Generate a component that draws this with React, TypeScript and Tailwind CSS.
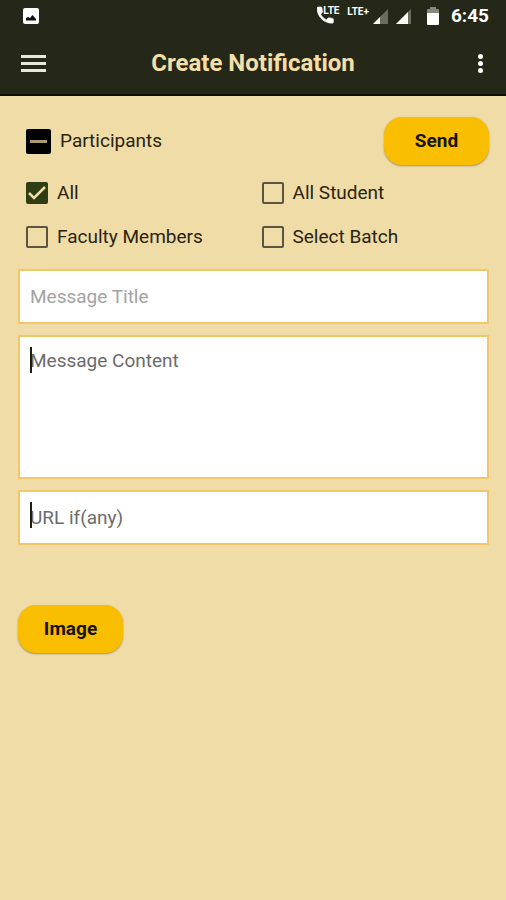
import { useState } from 'react';

const groups = ['All', 'All Student', 'Faculty Members', 'Select Batch'];

const fieldClass =
  'block w-full border-2 border-[#f3c769] bg-white px-[10px] text-[19px] leading-6 text-black outline-none';

const buttonClass =
  'h-12 w-[105px] rounded-[18px] bg-[#fabe00] text-[19px] font-bold text-[#171400] shadow-[0_1px_2px_rgba(0,0,0,0.35)]';

const StatusBar = () => {
  return (
    <div className="flex h-8 items-center justify-between pl-[23px] pr-[17px] text-white">
      <svg viewBox="0 0 16 16" className="size-4">
        <rect width="16" height="16" rx="2" fill="#fff" />
        <path d="M3 12.500V10l2-1 2 1 2.500-3 3.500 4v1.500z" fill="#111" />
      </svg>

      <div className="flex items-center">
        <div className="relative mr-[7px] h-5 w-[23px]">
          <svg viewBox="0 0 24 20" className="h-5 w-6">
            <path
              d="M0 2.200C0 1.500.5 1 1.200 1h2.600c.6 0 1.100.5 1.200 1.100.1 1.200.3 2.200.6 3.200.1.400 0 .9-.3 1.200L3.600 8.200c1.300 2.500 3.200 4.300 5.800 5.600l1.700-1.700c.3-.3.800-.4 1.200-.3 1 .3 2.100.5 3.200.6.600 0 .9.500.9 1.100V16c0 .7-.5 1.200-1.200 1.200C6.800 17.200 0 10.400 0 2.200z"
              fill="#fff"
              stroke="#fff"
              strokeWidth="0.600"
            />
          </svg>
          <span className="absolute left-[6px] top-[-1px] text-[10px] font-bold leading-3">LTE</span>
        </div>
        <span className="mr-1 -mt-2 text-[10px] font-bold leading-3">LTE+</span>
        <svg viewBox="0 0 15 15" className="mr-2 size-[15px]">
          <path d="M15 0v15H0z" fill="#6a6d5c" />
          <path d="M7 8v7H0z" fill="#fff" />
        </svg>
        <svg viewBox="0 0 15 15" className="mr-4 size-[15px]">
          <path d="M15 0v15H0z" fill="#6a6d5c" />
          <path d="M12 3v12H0z" fill="#fff" />
        </svg>
        <svg viewBox="0 0 12 18" className="mr-3 h-[18px] w-3">
          <path d="M3 0h6v2h2q1 0 1 1v3H0V3q0-1 1-1h2z" fill="#85877a" />
          <path d="M0 6h12v11q0 1-1 1H1q-1 0-1-1z" fill="#fff" />
        </svg>
        <span className="text-[19px] font-bold leading-6">6:45</span>
      </div>
    </div>
  );
};

const Header = () => {
  return (
    <header className="border-b-2 border-[#0c0d06] bg-[#252818]">
      <StatusBar />
      <div className="flex h-[62px] items-center justify-between pl-[21px] pr-[23px]">
        <button aria-label="Open menu" className="flex w-[25px] flex-col gap-1">
          <span className="h-[3px] w-full bg-[#e9e8dc]" />
          <span className="h-[3px] w-full bg-[#e9e8dc]" />
          <span className="h-[3px] w-full bg-[#e9e8dc]" />
        </button>
        <h1 className="text-2xl font-bold text-[#f3dfa8]">Create Notification</h1>
        <button aria-label="More options" className="flex w-[23px] flex-col items-end gap-[2px]">
          <span className="size-[5px] rounded-full bg-white" />
          <span className="size-[5px] rounded-full bg-white" />
          <span className="size-[5px] rounded-full bg-white" />
        </button>
      </div>
    </header>
  );
};

type CheckOptionProps = {
  label: string;
  checked: boolean;
  onChange: () => void;
};

const CheckOption = ({ label, checked, onChange }: CheckOptionProps) => {
  return (
    <label className="flex h-11 items-center gap-[9px] pl-2">
      <span className="relative size-[22px] shrink-0">
        <input
          type="checkbox"
          checked={checked}
          onChange={onChange}
          className="block size-[22px] appearance-none rounded-[2px] border-2 border-[#5c5340] checked:border-[#2f3d14] checked:bg-[#2f3d14]"
        />
        {checked && (
          <svg viewBox="0 0 22 22" className="pointer-events-none absolute inset-0 size-[22px]">
            <path d="M3 11l5 5L19 5" fill="none" stroke="#f1dda8" strokeWidth="2.500" />
          </svg>
        )}
      </span>
      {label}
    </label>
  );
};

// text cursor shown at the start of an empty field
const Caret = () => <span className="pointer-events-none absolute left-3 top-3 h-[26px] w-[2px] bg-[#1c1e10]" />;

const App = () => {
  const [selected, setSelected] = useState<string[]>(['All']);

  const toggle = (name: string) => {
    setSelected((prev) => (prev.includes(name) ? prev.filter((g) => g !== name) : [...prev, name]));
  };

  return (
    <div className="min-h-screen bg-[#efdca7] font-[Roboto,sans-serif] text-[19px] text-[#2b2410]">
      <Header />

      <form className="pl-[18px] pr-[17px] pt-[21px]" onSubmit={(e) => e.preventDefault()}>
        <div className="flex items-center justify-between pl-2">
          <label className="flex items-center gap-[9px]">
            <span className="relative size-[25px] shrink-0">
              <input
                type="checkbox"
                ref={(el) => {
                  if (el) el.indeterminate = true;
                }}
                className="block size-[25px] appearance-none rounded-[2px] bg-black"
              />
              <span className="pointer-events-none absolute left-1 top-[11px] h-[3px] w-[17px] bg-[#a99b76]" />
            </span>
            Participants
          </label>
          <button className={buttonClass}>Send</button>
        </div>

        <div className="mt-[6px] grid grid-cols-2">
          {groups.map((name) => (
            <CheckOption
              key={name}
              label={name}
              checked={selected.includes(name)}
              onChange={() => toggle(name)}
            />
          ))}
        </div>

        <div className="mt-[10px] flex flex-col gap-[11px]">
          <input
            aria-label="Message Title"
            placeholder="Message Title"
            className={`${fieldClass} h-[55px] placeholder:text-[#a3a3a3]`}
          />
          <div className="relative">
            <textarea
              aria-label="Message Content"
              placeholder="Message Content"
              className={`${fieldClass} h-36 resize-none pt-3 placeholder:text-[#6b6b6b]`}
            />
            <Caret />
          </div>
          <div className="relative">
            <input
              aria-label="URL if(any)"
              placeholder="URL if(any)"
              className={`${fieldClass} h-[55px] placeholder:text-[#6b6b6b]`}
            />
            <Caret />
          </div>
        </div>

        <button type="button" className={`${buttonClass} mt-[60px]`}>
          Image
        </button>
      </form>
    </div>
  );
};

export default App;
